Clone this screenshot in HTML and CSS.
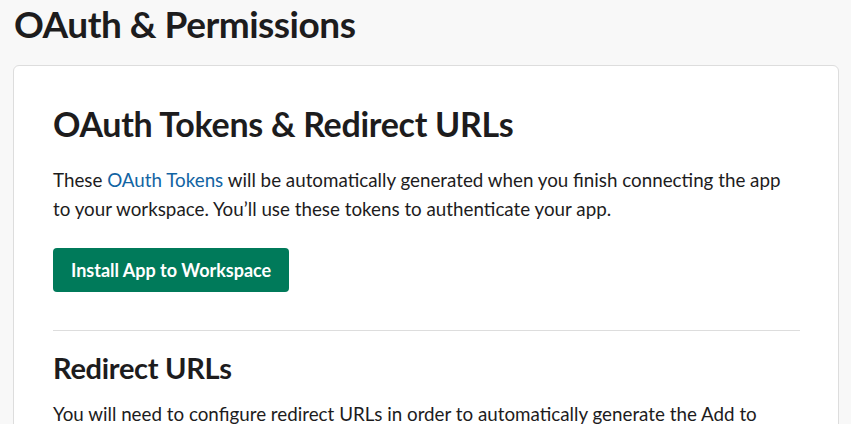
FILE: index.html
```html
<!DOCTYPE html>
<html>
<head>
<meta charset="utf-8">
<link rel="stylesheet" href="styles.css">
</head>
<body>
<div class="page">
  <h1 class="page-title">OAuth &amp; Permissions</h1>
  <div class="card">
    <h2 class="card-title">OAuth Tokens &amp; Redirect URLs</h2>
    <p class="text">These <a class="link" href="#">OAuth Tokens</a> will be automatically generated when you finish connecting the app to your workspace. You’ll use these tokens to authenticate your app.</p>
    <button class="btn">Install App to Workspace</button>
    <hr class="divider">
    <h3 class="sub-title">Redirect URLs</h3>
    <p class="text">You will need to configure redirect URLs in order to automatically generate the Add to Slack button or to distribute your app. If you pass a URL in an OAuth request, it must (partially) match one of the URLs you enter here.</p>
  </div>
</div>
</body>
</html>
```

FILE: styles.css
```css
html, body {
  margin: 0;
  padding: 0;
  background: #f8f8f8;
  font-family: Lato, "Noto Sans", sans-serif;
  color: #1d1c1d;
  overflow: hidden;
}
.page {
  padding: 0 13px 0 13px;
  width: 826px;
}
.page-title {
  font-size: 37px;
  font-weight: 700;
  line-height: 48px;
  margin: 0 0 17px 1px;
  letter-spacing: -0.5px;
}
.card {
  background: #fff;
  border: 1px solid #dddddd;
  border-radius: 6px;
  padding: 36px 38px 40px 39px;
}
.card-title {
  font-size: 34px;
  font-weight: 700;
  line-height: 44px;
  margin: 0 0 19px 0;
  letter-spacing: -0.3px;
}
.text {
  font-size: 18.8px;
  line-height: 29px;
  margin: 0 0 25px 0;
}
.link {
  color: #1264a3;
  text-decoration: none;
}
.btn {
  display: block;
  background: #007a5a;
  color: #fff;
  border: none;
  border-radius: 4px;
  font-family: Lato, "Noto Sans", sans-serif;
  font-weight: 700;
  font-size: 18px;
  height: 44px;
  padding: 0 18px;
  margin: 0 0 38px 0;
}
.divider {
  border: none;
  border-top: 1px solid #dddddd;
  margin: 0 0 18px 0;
}
.sub-title {
  font-size: 29px;
  font-weight: 700;
  line-height: 38px;
  margin: 0 0 12px 0;
  letter-spacing: -0.3px;
}
```
